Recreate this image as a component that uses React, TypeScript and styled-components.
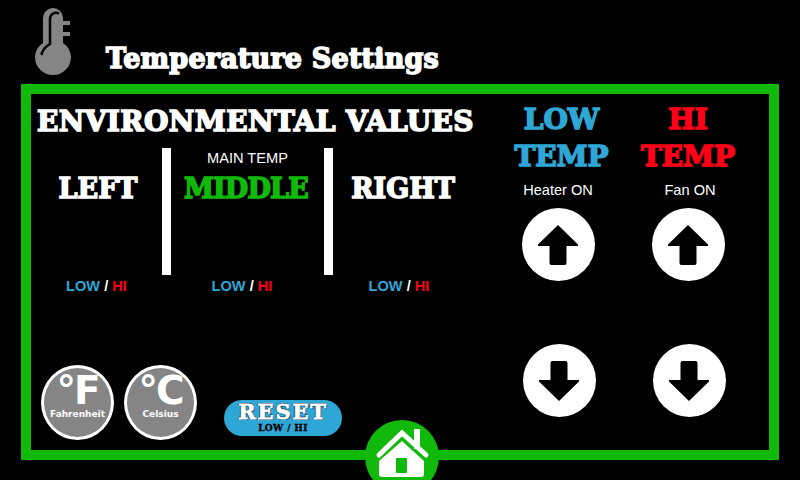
import styled, { createGlobalStyle } from 'styled-components';

const GREEN = '#10b90a';
const BLUE = '#2ea6d6';
const RED = '#ff0018';
const SLAB = '"DejaVu Serif", "Liberation Serif", serif';
const PLAIN = '"Liberation Sans", Arial, sans-serif';

const GlobalStyle = createGlobalStyle`
  html, body {
    margin: 0;
    background: #000;
  }
`;

const ThermometerIcon = () => (
  <svg width="37" height="68" viewBox="0 0 37 68">
    <path
      fill="#858585"
      d="M9 35V10a10 10 0 0 1 20 0v3h7v4h-7v7h7v4h-7v7a18 18 0 0 1 8 14 18 18 0 1 1-36 0 18 18 0 0 1 8-14z"
    />
    <path
      fill="none"
      stroke="#000"
      strokeWidth="2.5"
      d="M25 5.5C21 3.5 16 6 16 11V36C11 39 8 43 7.5 47"
    />
  </svg>
);

const ArrowIcon = ({ down }: { down?: boolean }) => (
  <svg width="40" height="42" viewBox="0 0 40 42">
    <path
      fill="#000"
      transform={down ? 'rotate(180 20 21)' : undefined}
      d="M20 1L39.5 20a1 1 0 0 1-1 2H28.5V39a2 2 0 0 1-2 2H13.5a2 2 0 0 1-2-2V22H1.5a1 1 0 0 1-1-2z"
    />
  </svg>
);

const HomeIcon = () => (
  <svg width="55" height="52" viewBox="0 0 55 52">
    <path fill="#fff" d="M39 1h6v20h-6z" />
    <path
      fill="none"
      stroke="#fff"
      strokeWidth="5"
      strokeLinecap="round"
      d="M4 27L27 5L51 27"
    />
    <path
      fill="#fff"
      d="M27 13L49 33V46a3 3 0 0 1-3 3H7a3 3 0 0 1-3-3V33z"
    />
    <rect x="21" y="30" width="11" height="15" rx="1" fill={GREEN} />
  </svg>
);

type ReadoutProps = {
  label: string;
  tone?: string;
  note?: string;
  labelShift?: number;
  limitsShift?: number;
};

const Readout = ({ label, tone, note, labelShift, limitsShift }: ReadoutProps) => (
  <Column>
    <Note>{note}</Note>
    <Zone $color={tone} $shift={labelShift}>{label}</Zone>
    <Limits $shift={limitsShift}>
      <Low>LOW</Low> / <Hi>HI</Hi>
    </Limits>
  </Column>
);

const App = () => {
  return (
    <Page>
      <GlobalStyle />
      <Header>
        <ThermometerIcon />
        <Title>Temperature Settings</Title>
      </Header>
      <Frame>
        <Values>
          <Heading>ENVIRONMENTAL VALUES</Heading>
          <Readouts>
            <Readout label="LEFT" labelShift={3} />
            <Divider />
            <Readout label="MIDDLE" tone={GREEN} note="MAIN TEMP" labelShift={-3} limitsShift={-11} />
            <Divider />
            <Readout label="RIGHT" limitsShift={-8} />
          </Readouts>
          <Footer>
            <UnitButton>
              <Degree>°F</Degree>
              <UnitName>Fahrenheit</UnitName>
            </UnitButton>
            <UnitButton>
              <Degree>°C</Degree>
              <UnitName>Celsius</UnitName>
            </UnitButton>
            <ResetButton>
              <ResetLabel>RESET</ResetLabel>
              <ResetSub>LOW / HI</ResetSub>
            </ResetButton>
          </Footer>
        </Values>
        <Controls>
          <Control>
            <ControlTitle $color={BLUE} $shift={7}>LOW<br />TEMP</ControlTitle>
            <Status>Heater ON</Status>
            <RoundButton><ArrowIcon /></RoundButton>
            <RoundButton $lower><ArrowIcon down /></RoundButton>
          </Control>
          <Control>
            <ControlTitle $color={RED}>HI<br />TEMP</ControlTitle>
            <Status $shift={4}>Fan ON</Status>
            <RoundButton><ArrowIcon /></RoundButton>
            <RoundButton $lower><ArrowIcon down /></RoundButton>
          </Control>
        </Controls>
        <HomeButton><HomeIcon /></HomeButton>
      </Frame>
    </Page>
  );
};

const Page = styled.div`
  width: 800px;
  height: 480px;
  background: #000;
  overflow: hidden;
  padding: 8px 21px 20px;
  box-sizing: border-box;
  display: flex;
  flex-direction: column;
`;

const Header = styled.header`
  height: 76px;
  padding-left: 13px;
  display: flex;
  align-items: flex-start;
  gap: 35px;
`;

const Title = styled.h1`
  margin: 35px 0 0;
  font: 900 27px/32px ${SLAB};
  -webkit-text-stroke: 1.6px #fff;
  letter-spacing: 0.2px;
  color: #fff;
  white-space: nowrap;
`;

const Frame = styled.main`
  position: relative;
  flex: 1;
  border: 10px solid ${GREEN};
  display: flex;
`;

const Values = styled.section`
  width: 462px;
  display: flex;
  flex-direction: column;
`;

const Heading = styled.h2`
  margin: 11px 0 0 6px;
  height: 33px;
  font: 900 28px/34px ${SLAB};
  -webkit-text-stroke: 1.6px #fff;
  letter-spacing: 0.4px;
  color: #fff;
  white-space: nowrap;
`;

const Readouts = styled.div`
  margin-top: 10px;
  display: grid;
  grid-template-columns: 131px 9px 153px 9px 140px;
  height: 148px;
`;

const Column = styled.div`
  display: flex;
  flex-direction: column;
  align-items: center;
`;

const Divider = styled.div`
  height: 127px;
  background: #fff;
`;

const Note = styled.div`
  height: 20px;
  font: 14.6px/20px ${PLAIN};
  color: #fff;
`;

const Zone = styled.div<{ $color?: string; $shift?: number }>`
  margin: 1px 0 0 ${({ $shift }) => $shift ?? 0}px;
  height: 107px;
  font: 900 27px/40px ${SLAB};
  letter-spacing: ${({ $color }) => ($color ? '-0.8px' : '0')};
  -webkit-text-stroke: 1.5px ${({ $color }) => $color ?? '#fff'};
  color: ${({ $color }) => $color ?? '#fff'};
`;

const Limits = styled.div<{ $shift?: number }>`
  margin-left: ${({ $shift }) => $shift ?? 0}px;
  font: 700 14.6px/20px ${PLAIN};
  color: #fff;
  white-space: nowrap;
`;

const Low = styled.span`
  color: ${BLUE};
`;

const Hi = styled.span`
  color: ${RED};
`;

const Footer = styled.div`
  margin-top: 69px;
  padding-left: 10px;
  display: flex;
  align-items: flex-start;
  gap: 10px;
`;

const UnitButton = styled.button`
  width: 73px;
  height: 75px;
  padding: 0;
  border: 3px solid #fff;
  border-radius: 50%;
  background: #858585;
  box-sizing: border-box;
  color: #fff;
  display: flex;
  flex-direction: column;
  align-items: center;
`;

const Degree = styled.span`
  margin-top: 5px;
  height: 35px;
  font: 700 39px/35px "DejaVu Sans", sans-serif;
  letter-spacing: -2px;
`;

const UnitName = styled.span`
  font: 700 9px/12px "DejaVu Sans", sans-serif;
`;

const ResetButton = styled.button`
  margin: 35px 0 0 17px;
  width: 118px;
  height: 36px;
  padding: 1px 0 0;
  border: none;
  border-radius: 18px;
  background: ${BLUE};
  display: flex;
  flex-direction: column;
  align-items: center;
`;

const ResetLabel = styled.span`
  height: 21px;
  font: 900 21px/21px ${SLAB};
  color: #fff;
  -webkit-text-stroke: 0.8px #fff;
  text-shadow: 1px 1px 0 #123, -1px 0 0 #123, 0 -1px 0 #123;
  letter-spacing: 1.8px;
`;

const ResetSub = styled.span`
  margin-top: 1px;
  font: 900 9px/11px ${SLAB};
  -webkit-text-stroke: 0.3px #000;
  letter-spacing: 0.4px;
  color: #000;
`;

const Controls = styled.section`
  flex: 1;
  display: grid;
  grid-template-columns: 130px 130px;
`;

const Control = styled.div`
  display: flex;
  flex-direction: column;
  align-items: center;
`;

const ControlTitle = styled.h3<{ $color: string; $shift?: number }>`
  margin: 7px 0 0 ${({ $shift }) => $shift ?? 0}px;
  height: 73px;
  text-align: center;
  font: 900 28px/37px ${SLAB};
  -webkit-text-stroke: 1.5px ${({ $color }) => $color};
  color: ${({ $color }) => $color};
`;

const Status = styled.div<{ $shift?: number }>`
  margin: 6px 0 0 ${({ $shift }) => $shift ?? 0}px;
  height: 20px;
  font: 14.6px/20px ${PLAIN};
  color: #fff;
`;

const RoundButton = styled.button<{ $lower?: boolean }>`
  margin: ${({ $lower }) => ($lower ? '63px 0 0 2px' : '8px 0 0')};
  width: 73px;
  height: 73px;
  padding: 0;
  border: none;
  border-radius: 50%;
  background: #fff;
  display: flex;
  align-items: center;
  justify-content: center;
`;

const HomeButton = styled.button`
  position: absolute;
  left: 334px;
  top: 326px;
  width: 74px;
  height: 74px;
  padding: 8px 0 0;
  border: none;
  border-radius: 50%;
  background: ${GREEN};
  display: flex;
  justify-content: center;
`;

export default App;
